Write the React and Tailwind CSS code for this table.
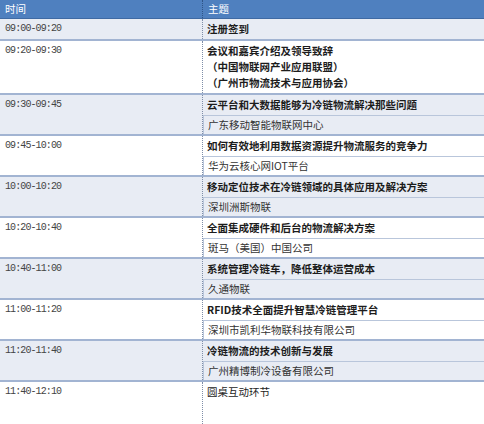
import React from "react";

const rows = [
  { time: "09:00-09:20", lines: ["注册签到"], bold: true },
  {
    time: "09:20-09:30",
    lines: ["会议和嘉宾介绍及领导致辞", "（中国物联网产业应用联盟）", "（广州市物流技术与应用协会）"],
    bold: true,
    multi: true,
  },
  { time: "09:30-09:45", title: "云平台和大数据能够为冷链物流解决那些问题", sub: "广东移动智能物联网中心" },
  { time: "09:45-10:00", title: "如何有效地利用数据资源提升物流服务的竞争力", sub: "华为云核心网IOT平台" },
  { time: "10:00-10:20", title: "移动定位技术在冷链领域的具体应用及解决方案", sub: "深圳洲斯物联" },
  { time: "10:20-10:40", title: "全面集成硬件和后台的物流解决方案", sub: "斑马（美国）中国公司" },
  { time: "10:40-11:00", title: "系统管理冷链车，降低整体运营成本", sub: "久通物联" },
  { time: "11:00-11:20", title: "RFID技术全面提升智慧冷链管理平台", sub: "深圳市凯利华物联科技有限公司" },
  { time: "11:20-11:40", title: "冷链物流的技术创新与发展", sub: "广州精博制冷设备有限公司" },
];

const cjk = { fontFamily: '"Noto Sans CJK SC", "Noto Sans", sans-serif' };
const mono = { fontFamily: '"Liberation Mono", "Noto Sans CJK SC", monospace' };

function TimeCell({ time }) {
  return (
    <div className="w-[202px] shrink-0 pl-[5px]">
      <div
        className="h-[20px] flex items-center text-[10px] tracking-[-0.9px] text-[#444444]"
        style={mono}
      >
        {time}
      </div>
    </div>
  );
}

export default function App() {
  return (
    <div className="w-[484px] h-[424px] overflow-hidden bg-white text-[10.5px] leading-none" style={cjk}>
      {/* header */}
      <div className="flex h-[19px] bg-[#4f80bf] text-white border-b border-[#3f6aa3]">
        <div className="w-[202px] shrink-0 pl-[5px] flex items-center">时间</div>
        <div className="flex-1 pl-[5px] flex items-center border-l border-dotted border-[#2f5587]">主题</div>
      </div>

      {rows.map((r, i) => {
        const gray = i % 2 === 0;
        const bg = gray ? "bg-[#e8ecf4]" : "bg-white";
        return (
          <div key={i} className={`flex ${bg} border-b-2 border-[#a2b4d2]`}>
            <TimeCell time={r.time} />
            <div className="flex-1 border-l border-dotted border-[#7f8ea8]">
              {r.lines ? (
                <div className={r.multi ? "pt-[2px] pb-[2px]" : ""}>
                  {r.lines.map((l, j) => (
                    <div
                      key={j}
                      className={`${r.multi ? "h-[16px]" : "h-[20px]"} flex items-center pl-[4px] font-bold text-[#1c1c1c] whitespace-nowrap`}
                    >
                      {l}
                    </div>
                  ))}
                </div>
              ) : (
                <div>
                  <div className="h-[20px] flex items-center pl-[4px] font-bold text-[#1c1c1c] whitespace-nowrap">
                    {r.title}
                  </div>
                  <div className="h-[19px] flex items-center pl-[4px] text-[#333333] whitespace-nowrap border-t border-l border-[#b9c6db]">
                    {r.sub}
                  </div>
                </div>
              )}
            </div>
          </div>
        );
      })}

      {/* last row */}
      <div className="flex bg-white h-[60px]">
        <TimeCell time="11:40-12:10" />
        <div className="flex-1 border-l border-dotted border-[#7f8ea8]">
          <div className="h-[20px] flex items-center pl-[4px] text-[#1c1c1c]">圆桌互动环节</div>
        </div>
      </div>
    </div>
  );
}
